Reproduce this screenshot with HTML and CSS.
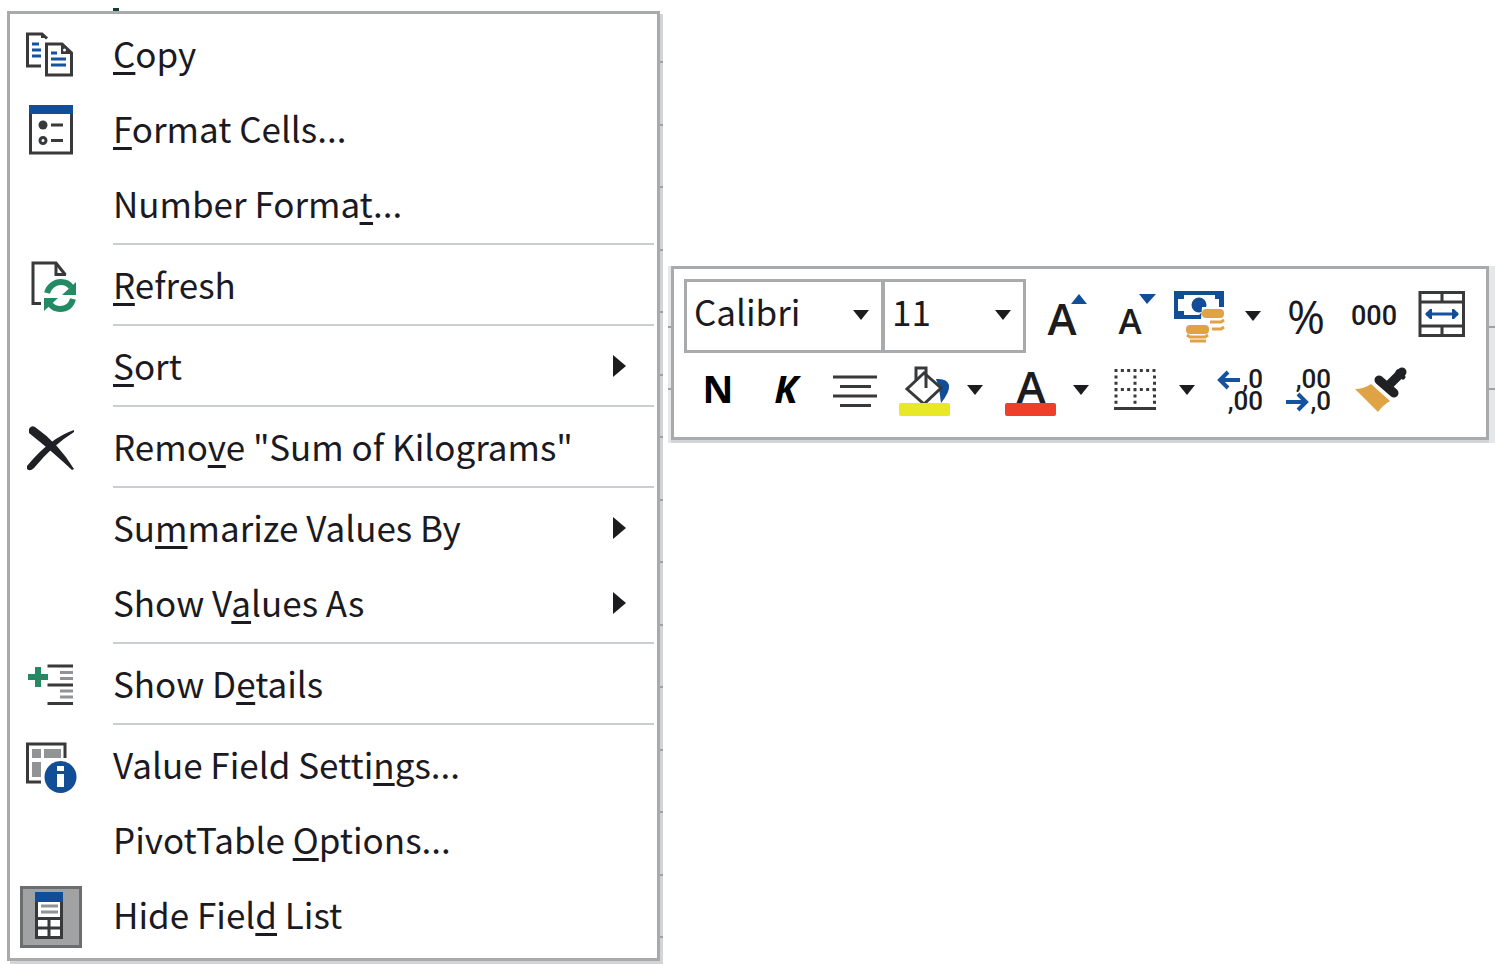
FILE: index.html
```html
<!DOCTYPE html>
<html lang="en">
<head>
  <meta charset="UTF-8">
  <title>PivotTable menu</title>
  <link rel="stylesheet" href="styles.css">
</head>
<body>
  <ul class="menu">
    <li>
      <button type="button" class="menu-item">
        <svg class="icon" viewBox="0 0 62 62">
          <path class="dark" d="M21 41H7.500V9H22L27 13.500"/>
          <path class="fill-dark" d="M21 8l7 5h-7z"/>
          <path class="blue" d="M12 19h7M12 25h9M12 31h9"/>
          <path class="dark" d="M26.500 50V19H42l9.500 9V50z"/>
          <path class="fill-dark" d="M41 18l12 11H41z"/>
          <circle cx="44.500" cy="25" r="1.500" fill="#fff"/>
          <path class="blue" d="M31 28h6M31 34h15M31 40h15"/>
        </svg>
        <span class="label"><u>C</u>opy</span>
      </button>
    </li>
    <li>
      <button type="button" class="menu-item">
        <svg class="icon" viewBox="0 0 62 62">
          <rect class="dark" x="10.500" y="7" width="41" height="46"/>
          <path class="fill-blue" d="M9 5h44v9H9z"/>
          <circle class="fill-dark" cx="23" cy="25" r="4.500"/>
          <circle class="dark" cx="23" cy="40.500" r="3"/>
          <path class="dark" d="M31 25h12M31 40.500h12"/>
        </svg>
        <span class="label"><u>F</u>ormat Cells...</span>
      </button>
    </li>
    <li>
      <button type="button" class="menu-item">
        <span class="icon"></span>
        <span class="label">Number Forma<u>t</u>...</span>
      </button>
    </li>
    <li class="separator"></li>
    <li>
      <button type="button" class="menu-item">
        <svg class="icon" viewBox="0 0 62 62">
          <path class="dark" d="M21 47.500H13V7H36l9.500 12"/>
          <path class="dark" d="M36 7v11.500h10"/>
          <path class="green" d="M27 37c2-7 8-11 14-11 4 0 8 2 10 5"/>
          <path class="fill-green" d="M56 26v13H42z"/>
          <path class="green" d="M53 43c-2 7-7 10-13 10-4 0-7-1-10-5"/>
          <path class="fill-green" d="M24 55V42h14z"/>
        </svg>
        <span class="label"><u>R</u>efresh</span>
      </button>
    </li>
    <li class="separator"></li>
    <li>
      <button type="button" class="menu-item">
        <span class="icon"></span>
        <span class="label"><u>S</u>ort</span>
        <svg class="submenu-arrow" viewBox="0 0 14 24"><path d="M0 1v22l13-11z"/></svg>
      </button>
    </li>
    <li class="separator"></li>
    <li>
      <button type="button" class="menu-item">
        <svg class="icon" viewBox="0 0 62 62">
          <path class="fill-black" d="M9 11q2-4 6-2Q38 25 54 51l-2 1Q34 35 9 15z"/>
          <path class="fill-black" d="M7 48Q30 20 54 12v2Q33 27 14 50q-4 4-7 1z"/>
        </svg>
        <span class="label">Remo<u>v</u>e "Sum of Kilograms"</span>
      </button>
    </li>
    <li class="separator"></li>
    <li>
      <button type="button" class="menu-item">
        <span class="icon"></span>
        <span class="label">Su<u>m</u>marize Values By</span>
        <svg class="submenu-arrow" viewBox="0 0 14 24"><path d="M0 1v22l13-11z"/></svg>
      </button>
    </li>
    <li>
      <button type="button" class="menu-item">
        <span class="icon"></span>
        <span class="label">Show V<u>a</u>lues As</span>
        <svg class="submenu-arrow" viewBox="0 0 14 24"><path d="M0 1v22l13-11z"/></svg>
      </button>
    </li>
    <li class="separator"></li>
    <li>
      <button type="button" class="menu-item">
        <svg class="icon" viewBox="0 0 62 62">
          <path class="fill-green" d="M15 12h6v7h7v6h-7v7h-6v-7H8v-6h7z"/>
          <path class="dark" d="M27.500 11H53M27.500 30H53M27.500 48.500H53"/>
          <path class="gray" d="M40 17.500h13M40 23.500h13M40 36h13M40 42h13"/>
        </svg>
        <span class="label">Show D<u>e</u>tails</span>
      </button>
    </li>
    <li class="separator"></li>
    <li>
      <button type="button" class="menu-item">
        <svg class="icon" viewBox="0 0 62 62">
          <path class="dark" d="M21 46H7.500V8H45v14"/>
          <path class="fill-gray" d="M12 13h9v9h-9zM24 13h17v9H24zM12 26h9v15h-9z"/>
          <circle class="fill-blue" cx="40.500" cy="41" r="16"/>
          <path fill="#fff" d="M37 30h7v5h-7zM37 38h7v13h-7z"/>
        </svg>
        <span class="label">Value Field Setti<u>n</u>gs...</span>
      </button>
    </li>
    <li>
      <button type="button" class="menu-item">
        <span class="icon"></span>
        <span class="label">PivotTable <u>O</u>ptions...</span>
      </button>
    </li>
    <li>
      <button type="button" class="menu-item">
        <svg class="icon" viewBox="0 0 62 62">
          <rect x="1.500" y="1.500" width="59" height="59" fill="#a1a2a4" stroke="#6c6d6f" stroke-width="3"/>
          <rect x="16.500" y="8" width="25" height="44" fill="#fff"/>
          <path class="dark" d="M16.500 12V51.500h25V12M16 32.500h26M16 42h26M29 32v20"/>
          <path class="fill-blue" d="M15 6h28v10H15z"/>
          <path class="gray" d="M21 20h17M21 26h17"/>
        </svg>
        <span class="label">Hide Fiel<u>d</u> List</span>
      </button>
    </li>
  </ul>

  <div class="toolbar">
    <div class="toolbar-row">
      <div class="combo combo-font">
        <select aria-label="Font">
          <option>Calibri</option>
        </select>
        <svg class="drop" viewBox="0 0 18 10"><path d="M1 0h16L9 10z"/></svg>
      </div>
      <div class="combo combo-size">
        <select aria-label="Font size">
          <option>11</option>
        </select>
        <svg class="drop" viewBox="0 0 18 10"><path d="M1 0h16L9 10z"/></svg>
      </div>
      <button type="button" class="tool" aria-label="Increase font size">
        <svg class="icon" viewBox="0 0 62 62">
          <text class="letter" x="29" y="50" font-size="44">A</text>
          <path class="fill-blue" d="M38 19h16l-8-10z"/>
        </svg>
      </button>
      <button type="button" class="tool" aria-label="Decrease font size">
        <svg class="icon" viewBox="0 0 62 62">
          <text class="letter" x="29" y="49" font-size="35">A</text>
          <path class="fill-blue" d="M38 9h17l-9 10z"/>
        </svg>
      </button>
      <button type="button" class="tool" aria-label="Accounting format">
        <svg class="icon" viewBox="0 0 62 62">
          <path class="fill-blue" d="M5 6h50v18H33v10H5z"/>
          <path fill="#fff" d="M15 10h31v4h4v10H36l-6 6H15v-4H9V14h6z"/>
          <circle class="fill-blue" cx="30" cy="20" r="7.500"/>
          <path fill="#fff" d="M33 22h24v18H40l-8-6z"/>
          <rect class="fill-gold" x="33" y="24" width="22" height="9" rx="4"/>
          <rect class="fill-gold" x="17" y="40" width="23" height="9" rx="4"/>
          <path class="gold" d="M41 37h11l3-2M43 44h9l3-2M18 50l3 2h15l3-2M21 56h16"/>
        </svg>
      </button>
      <button type="button" class="tool-drop" aria-label="Accounting formats">
        <svg class="drop" viewBox="0 0 18 10"><path d="M1 0h16L9 10z"/></svg>
      </button>
      <button type="button" class="tool percent">%</button>
      <button type="button" class="tool thousands">000</button>
      <button type="button" class="tool" aria-label="Merge and center">
        <svg class="icon" viewBox="0 0 62 62">
          <path class="dark" d="M9 7.500h43.500v43H9zM9 17h43.500M9 41h43.500M31 7v10M31 41v10"/>
          <path class="blue" d="M15 29h32"/>
          <path class="fill-blue" d="M14 29l5-5h2v10h-2zM48 29l-5-5h-2v10h2z"/>
        </svg>
      </button>
    </div>
    <div class="toolbar-row">
      <button type="button" class="tool bold">N</button>
      <button type="button" class="tool bold italic">K</button>
      <button type="button" class="tool" aria-label="Center">
        <svg class="icon" viewBox="0 0 62 62">
          <path class="dark" d="M10 18h44M17 27.500h31M10 37h44M17 46.500h31"/>
        </svg>
      </button>
      <button type="button" class="tool" aria-label="Fill color">
        <svg class="icon" viewBox="0 0 62 62">
          <path class="fill-blue" d="M45 20q11-1 13 6 1 7-8 18l-2-15z"/>
          <path class="dark paper" d="M33 14L16 30l17 15 17-16z"/>
          <path class="dark" d="M25 22V9h10v20"/>
          <rect x="8" y="44" width="51" height="13" rx="2" fill="#e9e826"/>
        </svg>
      </button>
      <button type="button" class="tool-drop" aria-label="Fill colors">
        <svg class="drop" viewBox="0 0 18 10"><path d="M1 0h16L9 10z"/></svg>
      </button>
      <button type="button" class="tool" aria-label="Font color">
        <svg class="icon" viewBox="0 0 62 62">
          <rect x="8" y="44" width="51" height="13" rx="2" fill="#ef3f2a"/>
          <text class="letter" x="34" y="44" font-size="44">A</text>
        </svg>
      </button>
      <button type="button" class="tool-drop" aria-label="Font colors">
        <svg class="drop" viewBox="0 0 18 10"><path d="M1 0h16L9 10z"/></svg>
      </button>
      <button type="button" class="tool" aria-label="Borders">
        <svg class="icon" viewBox="0 0 62 62">
          <path class="dark" stroke-dasharray="3 3.330" d="M11.500 11.500H53M11.500 30.500H53M13 16.500V46M32 16.500V46M51.500 16.500V46"/>
          <path class="dark" d="M11 49.500h42"/>
        </svg>
      </button>
      <button type="button" class="tool-drop" aria-label="Border styles">
        <svg class="drop" viewBox="0 0 18 10"><path d="M1 0h16L9 10z"/></svg>
      </button>
      <button type="button" class="tool" aria-label="Increase decimal">
        <svg class="icon" viewBox="0 0 62 62">
          <text class="digits" x="54" y="29">,0</text>
          <text class="digits" x="54" y="51">,00</text>
          <path class="arrow" d="M31 21H11M19 13l-8 8 8 8"/>
        </svg>
      </button>
      <button type="button" class="tool" aria-label="Decrease decimal">
        <svg class="icon" viewBox="0 0 62 62">
          <text class="digits" x="54" y="29">,00</text>
          <text class="digits" x="54" y="51">,0</text>
          <path class="arrow" d="M9 43h20M21 35l8 8-8 8"/>
        </svg>
      </button>
      <button type="button" class="tool" aria-label="Format painter">
        <svg class="icon" viewBox="0 0 62 62">
          <path class="fill-gold" d="M10 30q9 0 16-5l19 17q-7 4-12 11z"/>
          <path class="handle" d="M34 21l15 13M45 25L57 13"/>
          <path class="handle grip" d="M53 13l5 5"/>
        </svg>
      </button>
    </div>
  </div>
</body>
</html>
```
FILE: styles.css
```css
* {
    box-sizing: border-box;
}

body {
    margin: 0;
    padding: 11px 12px 3px 7px;
    min-height: 100vh;
    background: #fff;
    color: #1b1a22;
    font-family: "Noto Sans CJK SC", "Noto Sans", sans-serif;
    font-size: 35px;
    display: grid;
    grid-template-columns: 653fr 818fr;
    column-gap: 11px;
    align-items: start;
    isolation: isolate;
}

button, select {
    margin: 0;
    padding: 0;
    border: none;
    background: none;
    color: inherit;
    font: inherit;
}

svg {
    fill: #1c1c1e;
}

/* context menu */
.menu {
    position: relative;
    margin: 0;
    padding: 4px 3px 4px 10px;
    border: 3px solid #a9aaab;
    background: #fff;
    box-shadow: 3px 3px 0 #d3d4d5;
    list-style: none;
}

/* grid lines of the sheet that stick out around the menu */
.menu::before {
    content: "";
    position: absolute;
    top: -6px;
    left: 103px;
    width: 6px;
    height: 3px;
    background: #17402c;
}

.menu::after {
    content: "";
    position: absolute;
    top: -11px;
    right: -6px;
    bottom: -3px;
    width: 3px;
    background: repeating-linear-gradient(transparent 0 58px, #a0a1a2 58px 60px, transparent 60px 121px, #a0a1a2 121px 123px, transparent 123px 125px);
}

.menu-item {
    display: flex;
    align-items: center;
    width: 100%;
    height: 75px;
    text-align: left;
}

.separator {
    height: 6px;
    margin-left: 93px;
    border-top: 2px solid #c9ced1;
}

.icon {
    display: block;
    flex: none;
    width: 62px;
    height: 62px;
}

.label {
    flex: 1;
    margin-left: 31px;
    padding-bottom: 5px;
    line-height: 48px;
    white-space: nowrap;
}

.label u {
    text-decoration-thickness: 3px;
    text-underline-offset: 4px;
    text-decoration-skip-ink: none;
}

.submenu-arrow {
    width: 14px;
    height: 24px;
    margin-right: 27px;
    margin-bottom: 3px;
}

/* icon strokes and fills */
.dark, .blue, .green, .gray, .gold, .arrow, .handle {
    fill: none;
    stroke-width: 3;
}

.dark { stroke: #38393b; }
.blue { stroke: #1552a0; }
.green { stroke: #238a63; stroke-width: 6; }
.gray { stroke: #929395; }
.gold { stroke: #dfa245; }
.arrow { stroke: #1552a0; stroke-width: 4; }
.paper { fill: #fff; }

.handle {
    stroke: #202124;
    stroke-width: 11;
    stroke-linecap: round;
}

.handle:not(.grip) {
    stroke-width: 9;
}

.grip {
    stroke-width: 5;
}

.fill-dark { fill: #38393b; }
.fill-black { fill: #202124; }
.fill-blue { fill: #124e98; }
.fill-green { fill: #238a63; }
.fill-gray { fill: #929395; }
.fill-gold { fill: #dfa245; }

.letter {
    font-family: "Open Sans", sans-serif;
    font-weight: 600;
    text-anchor: middle;
}

.digits {
    font-family: Roboto, sans-serif;
    font-size: 26px;
    font-weight: 500;
    text-anchor: end;
}

/* mini toolbar */
.toolbar {
    position: relative;
    margin-top: 255px;
    padding: 10px;
    border: 3px solid #a9aaab;
    background: #fff;
    box-shadow: 0 3px 0 #d3d4d5;
}

/* sheet grid lines at both sides of the toolbar */
.toolbar::before {
    content: "";
    position: absolute;
    z-index: -1;
    top: -3px;
    right: -9px;
    bottom: -6px;
    left: -6px;
    background: linear-gradient(transparent 60px, #a0a1a2 60px 62px, transparent 62px 122px, #a0a1a2 122px 124px, transparent 124px) #e6e7e8;
}

.toolbar-row {
    display: flex;
    align-items: center;
    height: 74px;
}

.combo {
    position: relative;
    height: 74px;
}

.combo-font { width: 200px; }
.combo-size { width: 144px; margin-left: -2px; margin-right: 4px; }

.combo select {
    appearance: none;
    width: 100%;
    height: 100%;
    padding: 0 40px 12px 7px;
    border: 3px solid #a9aaab;
}

.combo .drop {
    position: absolute;
    right: 14px;
    top: 31px;
}

.drop {
    display: block;
    width: 18px;
    height: 10px;
}

.tool, .tool-drop {
    display: flex;
    align-items: center;
    justify-content: center;
    flex: none;
    width: 68px;
    height: 68px;
}

.tool-drop {
    width: 38px;
}

.bold {
    padding-bottom: 4px;
    font-family: "Open Sans", sans-serif;
    font-size: 38px;
    font-weight: 700;
    color: #000;
}

.italic {
    font-style: italic;
}

.percent {
    font-family: "Open Sans", sans-serif;
    font-size: 46px;
    font-weight: 500;
}

.thousands {
    font-family: Roboto, sans-serif;
    font-size: 27px;
    font-weight: 500;
}
```
